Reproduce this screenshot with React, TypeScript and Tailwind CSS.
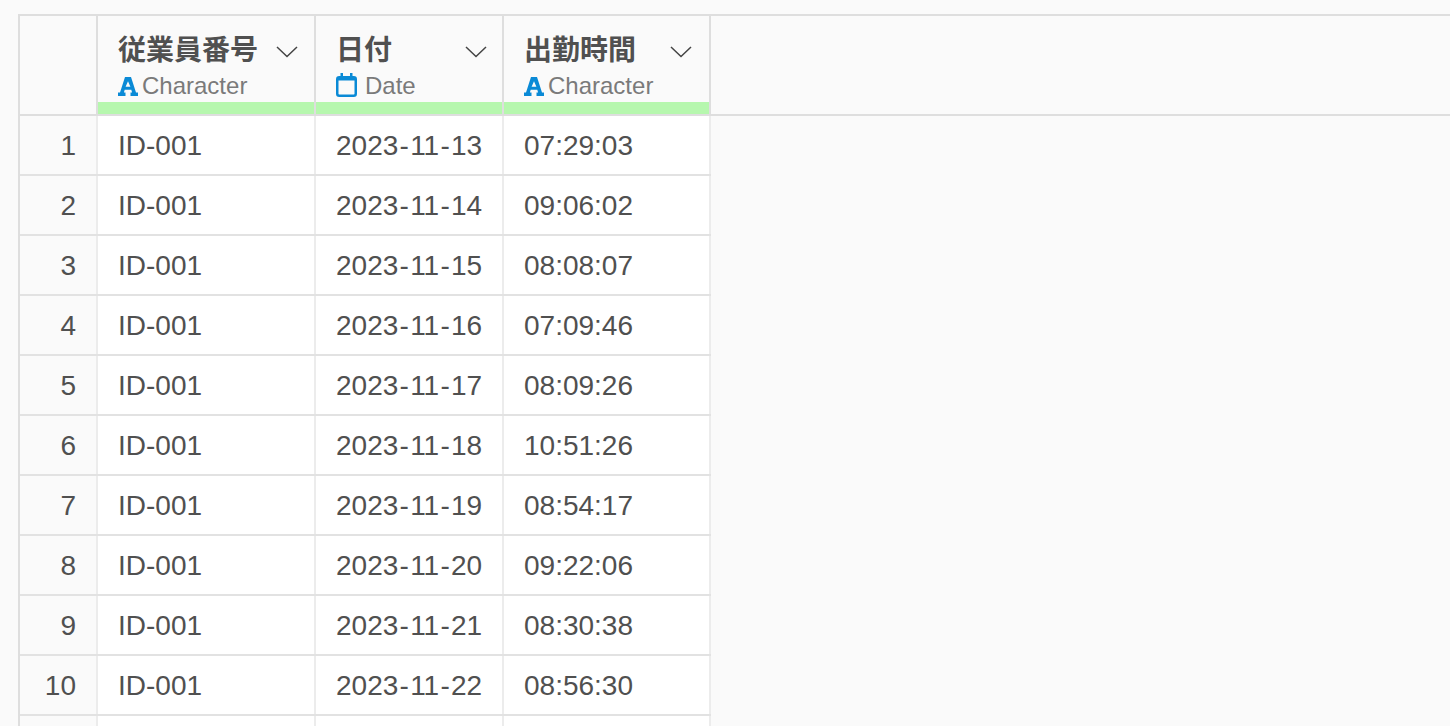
const rows = [
  ['2023-11-13', '07:29:03'],
  ['2023-11-14', '09:06:02'],
  ['2023-11-15', '08:08:07'],
  ['2023-11-16', '07:09:46'],
  ['2023-11-17', '08:09:26'],
  ['2023-11-18', '10:51:26'],
  ['2023-11-19', '08:54:17'],
  ['2023-11-20', '09:22:06'],
  ['2023-11-21', '08:30:38'],
  ['2023-11-22', '08:56:30'],
  ['', ''],
]

function CharIcon() {
  return (
    <svg width="20" height="19" viewBox="0 0 20 19" className="shrink-0">
      <path
        fill="#0a8ad6"
        d="M7 0h6l5 15.500h2V19h-7.500v-3.500h1.600l-.8-2.800H6.700l-.8 2.800h1.600V19H0v-3.500h2zM10 4.200 7.600 9.700h4.800z"
      />
    </svg>
  )
}

function DateIcon() {
  return (
    <svg width="21" height="24" viewBox="0 0 21 24" className="mb-[2px] shrink-0">
      <rect x="1.250" y="4.250" width="18.500" height="18.500" rx="2" fill="none" stroke="#0a8ad6" strokeWidth="2.500" />
      <rect x="1" y="4" width="19" height="3.500" fill="#0a8ad6" />
      <rect x="4.500" y="0" width="2.500" height="5" fill="#0a8ad6" />
      <rect x="14" y="0" width="2.500" height="5" fill="#0a8ad6" />
    </svg>
  )
}

function Chevron() {
  return (
    <svg width="22" height="12" viewBox="0 0 22 12" className="mb-[10px] shrink-0">
      <polyline points="1,1 11,10.500 21,1" fill="none" stroke="#444" strokeWidth="1.500" />
    </svg>
  )
}

function HeaderCell({ title, type, className }: { title: string; type: 'char' | 'date'; className: string }) {
  return (
    <div className={`${className} flex flex-col border-r-2 border-[#dedede]`}>
      <div className="h-[86px] pl-5 [padding-right:var(--chevron-gap)]">
        <div className="flex h-[52px] items-end justify-between">
          <span className="text-[28px] leading-[40px] font-bold text-[#505050] font-['Noto_Sans_CJK_JP',sans-serif]">{title}</span>
          <Chevron />
        </div>
        {type === 'char' ? (
          <div className="mt-[5px] flex h-[26px] items-center gap-[4px]">
            <CharIcon />
            <span className="text-[24px] leading-[26px] text-[#7a7a7a]">Character</span>
          </div>
        ) : (
          <div className="mt-[5px] flex h-[26px] items-center gap-2">
            <DateIcon />
            <span className="text-[24px] leading-[26px] text-[#7a7a7a]">Date</span>
          </div>
        )}
      </div>
      <div className="h-3 bg-[#b6f7ae]" />
    </div>
  )
}

// the hyphens in the dates sit wider apart than Liberation sets them
function DateText({ value }: { value: string }) {
  const parts = value.split('-')
  return (
    <span>
      {parts.map((p, i) => (
        <span key={i}>
          {i > 0 && <span className="mx-[1.250px]">-</span>}
          {p}
        </span>
      ))}
    </span>
  )
}

export default function App() {
  return (
    <div className="h-[726px] w-[1450px] overflow-hidden bg-[#fafafa] pt-[14px] pl-[18px] font-['Liberation_Sans',sans-serif]">
      {/* header */}
      <div className="flex h-[102px] border-y-2 border-l-2 border-[#dedede]">
        <div className="w-[78px] border-r-2 border-[#dedede]" />
        <HeaderCell title="従業員番号" type="char" className="w-[218px] [--chevron-gap:16px]" />
        <HeaderCell title="日付" type="date" className="w-[188px] [--chevron-gap:15px]" />
        <HeaderCell title="出勤時間" type="char" className="w-[207px] [--chevron-gap:17px]" />
      </div>

      {/* rows */}
      <div className="flex w-[693px] flex-col border-l-2 border-[#dedede]">
        {rows.map((row, i) => (
          <div key={i} className="flex h-[60px] shrink-0 border-b-2 border-[#e2e2e2] text-[28px] text-[#505050]">
            <div className="flex w-[78px] items-center justify-end border-r-2 border-[#ececec] pt-[2px] pr-[20px]">{row[0] ? i + 1 : ''}</div>
            <div className="flex w-[218px] items-center border-r-2 border-[#ececec] bg-white pt-[2px] pl-5">{row[0] ? 'ID-001' : ''}</div>
            <div className="flex w-[188px] items-center border-r-2 border-[#ececec] bg-white pt-[2px] pl-5"><DateText value={row[0]} /></div>
            <div className="flex w-[207px] items-center border-r-2 border-[#ececec] bg-white pt-[2px] pl-5">{row[1]}</div>
          </div>
        ))}
      </div>
    </div>
  )
}
